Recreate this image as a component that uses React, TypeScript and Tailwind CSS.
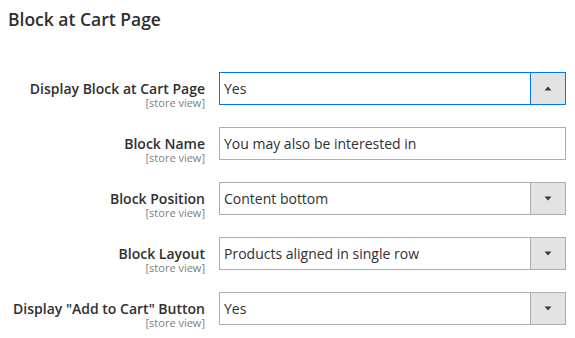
import React from "react";

type Field = {
  label: string;
  value: string;
  kind: "select" | "text";
  open?: boolean;
};

const fields: Field[] = [
  { label: "Display Block at Cart Page", value: "Yes", kind: "select", open: true },
  { label: "Block Name", value: "You may also be interested in", kind: "text" },
  { label: "Block Position", value: "Content bottom", kind: "select" },
  { label: "Block Layout", value: "Products aligned in single row", kind: "select" },
  { label: 'Display "Add to Cart" Button', value: "Yes", kind: "select" },
];

const Arrow = ({ up }: { up?: boolean }) => (
  <svg width="8" height="5" viewBox="0 0 8 5" className="block">
    {up ? (
      <polygon points="0.5,4.5 7.5,4.5 4,0.5" fill="#41362f" />
    ) : (
      <polygon points="0.5,0.5 7.5,0.5 4,4.5" fill="#41362f" />
    )}
  </svg>
);

const FieldRow = ({ field }: { field: Field }) => {
  const border = field.open ? "border-[#007bdb]" : "border-[#adadad]";
  return (
    <div className="flex items-start h-[33px]">
      <div className="w-[205px] text-right pt-[8px]">
        <div className="text-[14px] leading-[17px] font-semibold text-[#303030]">{field.label}</div>
        <div className="text-[11px] leading-[11px] text-[#808080]">[store view]</div>
      </div>
      <div className={`ml-[14px] w-[347px] h-[33px] border ${border} bg-white flex`}>
        <div className="flex-1 flex items-center pl-[4px] text-[14px] text-[#303030]">
          {field.value}
        </div>
        {field.kind === "select" && (
          <div className={`w-[35px] border-l ${border} bg-[#e3e3e3] flex items-center justify-center`}>
            <Arrow up={field.open} />
          </div>
        )}
      </div>
    </div>
  );
};

export default function App() {
  return (
    <div
      className="w-[575px] h-[338px] bg-white overflow-hidden"
      style={{ fontFamily: '"Open Sans", "Liberation Sans", sans-serif' }}
    >
      <div className="pl-[8px] pt-[7px] text-[17.5px] leading-[24px] font-semibold text-[#303030]">
        Block at Cart Page
      </div>
      <div className="mt-[41px] flex flex-col gap-[22px]">
        {fields.map((f) => (
          <FieldRow key={f.label} field={f} />
        ))}
      </div>
    </div>
  );
}
